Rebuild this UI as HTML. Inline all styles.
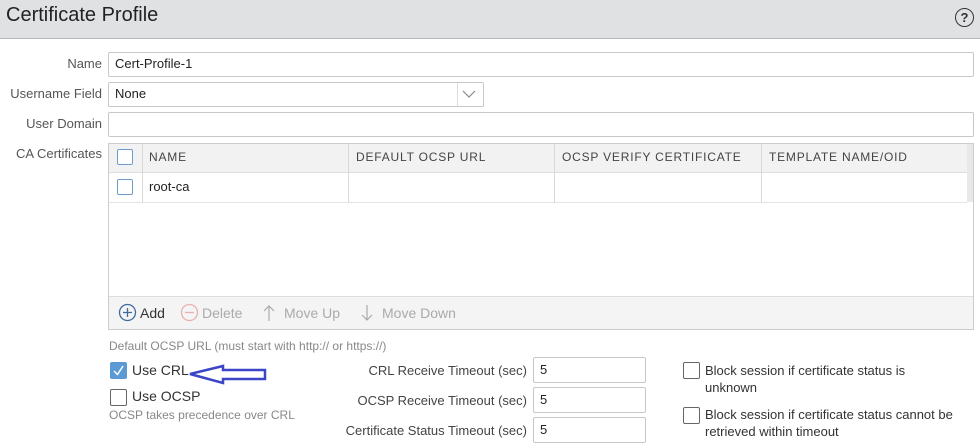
<!DOCTYPE html><html><head><style>
body{margin:0;width:980px;height:445px;background:#fff;font-family:"Liberation Sans",sans-serif;color:#333;position:relative;overflow:hidden;font-size:13px}
.a{position:absolute}
.hdr{left:0;top:0;width:980px;height:38px;background:#e0e1e3;border-bottom:1px solid #b8b9bb}
.lbl{text-align:right;width:102px;left:0;color:#555}
.inp{border:1px solid #c8c8c8;border-radius:2px;background:#fff;box-sizing:border-box;padding-left:6px;line-height:22px;color:#222}
.cb{width:14px;height:14px;border:1.5px solid #6d9ccc;border-radius:2px;background:#fff}
.th{font-size:12px;letter-spacing:.8px;color:#444;top:150px}
.vl{width:1px;background:#d8d8d8}
.gray{color:#aaa}
</style></head><body>
<div class="a hdr"></div>
<div class="a" style="left:6px;top:4px;font-size:20px;color:#222">Certificate Profile</div>
<div class="a" style="left:955px;top:8px;width:17px;height:17px;border:1.6px solid #333;border-radius:50%;font-size:13px;font-weight:bold;text-align:center;line-height:17px">?</div>

<div class="a lbl" style="top:56px">Name</div>
<div class="a inp" style="left:108px;top:52px;width:866px;height:25px">Cert-Profile-1</div>
<div class="a lbl" style="top:86px">Username Field</div>
<div class="a inp" style="left:108px;top:82px;width:376px;height:25px">None</div>
<div class="a" style="left:457px;top:83px;width:1px;height:23px;background:#ddd"></div>
<svg class="a" style="left:462px;top:90px" width="14" height="9"><path d="M1 1L7 7L13 1" fill="none" stroke="#888" stroke-width="1.2"/></svg>
<div class="a lbl" style="top:116px">User Domain</div>
<div class="a inp" style="left:108px;top:112px;width:866px;height:25px"></div>
<div class="a lbl" style="top:146px">CA Certificates</div>

<div class="a" style="left:108px;top:143px;width:864px;height:185px;border:1px solid #ccc"></div>
<div class="a" style="left:109px;top:144px;width:864px;height:28px;background:#f2f2f2;border-bottom:1px solid #ddd"></div>
<div class="a" style="left:967px;top:144px;width:6px;height:58px;background:#e8e8e8"></div>
<div class="a" style="left:109px;top:202px;width:858px;height:1px;background:#e4e4e4"></div>
<div class="a vl" style="left:142px;top:144px;height:58px"></div>
<div class="a vl" style="left:348px;top:144px;height:58px"></div>
<div class="a vl" style="left:554px;top:144px;height:58px"></div>
<div class="a vl" style="left:761px;top:144px;height:58px"></div>
<div class="a cb" style="left:117px;top:149px"></div>
<div class="a cb" style="left:117px;top:179px"></div>
<div class="a th" style="left:149px">NAME</div>
<div class="a th" style="left:356px">DEFAULT OCSP URL</div>
<div class="a th" style="left:562px">OCSP VERIFY CERTIFICATE</div>
<div class="a th" style="left:769px">TEMPLATE NAME/OID</div>
<div class="a" style="left:149px;top:179px;color:#222">root-ca</div>

<div class="a" style="left:109px;top:296px;width:864px;height:32px;background:#f4f4f4;border-top:1px solid #ddd"></div>
<svg class="a" style="left:118px;top:303px" width="19" height="19"><circle cx="9.5" cy="9.5" r="8" fill="none" stroke="#3d6a9e" stroke-width="1.3"/><path d="M5 9.5H14M9.5 5V14" stroke="#3d6a9e" stroke-width="1.3"/></svg>
<div class="a" style="left:140px;top:305px;font-size:14px;color:#333">Add</div>
<svg class="a" style="left:180px;top:303px" width="19" height="19"><circle cx="9.5" cy="9.5" r="8" fill="none" stroke="#e8b0b0" stroke-width="1.3"/><path d="M5 9.5H14" stroke="#e8b0b0" stroke-width="1.3"/></svg>
<div class="a gray" style="left:202px;top:305px;font-size:14px">Delete</div>
<svg class="a" style="left:263px;top:304px" width="12" height="18"><path d="M6 2V17M1 7L6 2L11 7" fill="none" stroke="#aaa" stroke-width="1.2"/></svg>
<div class="a gray" style="left:284px;top:305px;font-size:14px">Move Up</div>
<svg class="a" style="left:361px;top:304px" width="12" height="18"><path d="M6 1V16M1 11L6 16L11 11" fill="none" stroke="#aaa" stroke-width="1.2"/></svg>
<div class="a gray" style="left:382px;top:305px;font-size:14px">Move Down</div>

<div class="a" style="left:109px;top:339px;font-size:12px;color:#888">Default OCSP URL (must start with http:// or https://)</div>
<div class="a" style="left:110px;top:362px;width:17px;height:17px;background:#5c9ad6;border-radius:2px"></div>
<svg class="a" style="left:110px;top:362px" width="17" height="17"><path d="M4 9L7.5 12.5L13 4" fill="none" stroke="#fff" stroke-width="1.5"/></svg>
<div class="a" style="left:132px;top:362px;font-size:14px">Use CRL</div>
<svg class="a" style="left:185px;top:362px" width="85" height="24"><path d="M5 12L38 4V8H80V17H38V21Z" fill="none" stroke="#3b45c8" stroke-width="2.5"/></svg>
<div class="a" style="left:110px;top:389px;width:15px;height:15px;border:1px solid #666;border-radius:2px"></div>
<div class="a" style="left:132px;top:388px;font-size:14px">Use OCSP</div>
<div class="a" style="left:109px;top:408px;font-size:12px;color:#888">OCSP takes precedence over CRL</div>

<div class="a" style="right:453px;top:363px;color:#444">CRL Receive Timeout (sec)</div>
<div class="a" style="right:453px;top:393px;color:#444">OCSP Receive Timeout (sec)</div>
<div class="a" style="right:453px;top:423px;color:#444">Certificate Status Timeout (sec)</div>
<div class="a inp" style="left:533px;top:357px;width:113px;height:26px;line-height:24px">5</div>
<div class="a inp" style="left:533px;top:387px;width:113px;height:26px;line-height:24px">5</div>
<div class="a inp" style="left:533px;top:417px;width:113px;height:26px;line-height:24px">5</div>

<div class="a" style="left:683px;top:362px;width:15px;height:15px;border:1px solid #666;border-radius:2px"></div>
<div class="a" style="left:705px;top:362px;line-height:17px">Block session if certificate status is<br>unknown</div>
<div class="a" style="left:683px;top:407px;width:15px;height:15px;border:1px solid #666;border-radius:2px"></div>
<div class="a" style="left:705px;top:406px;line-height:17px">Block session if certificate status cannot be<br>retrieved within timeout</div>
</body></html>
